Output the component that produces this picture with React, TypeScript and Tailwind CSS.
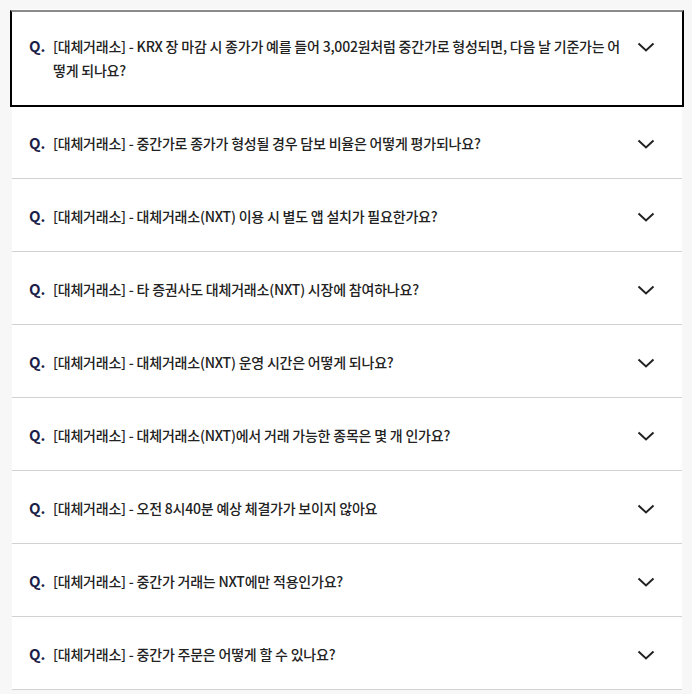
import React from "react";

const items = [
  "[대체거래소] - KRX 장 마감 시 종가가 예를 들어 3,002원처럼 중간가로 형성되면, 다음 날 기준가는 어떻게 되나요?",
  "[대체거래소] - 중간가로 종가가 형성될 경우 담보 비율은 어떻게 평가되나요?",
  "[대체거래소] - 대체거래소(NXT) 이용 시 별도 앱 설치가 필요한가요?",
  "[대체거래소] - 타 증권사도 대체거래소(NXT) 시장에 참여하나요?",
  "[대체거래소] - 대체거래소(NXT) 운영 시간은 어떻게 되나요?",
  "[대체거래소] - 대체거래소(NXT)에서 거래 가능한 종목은 몇 개 인가요?",
  "[대체거래소] - 오전 8시40분 예상 체결가가 보이지 않아요",
  "[대체거래소] - 중간가 거래는 NXT에만 적용인가요?",
  "[대체거래소] - 중간가 주문은 어떻게 할 수 있나요?",
];

function Chevron() {
  return (
    <svg width="18" height="10" viewBox="0 0 18 10" className="mt-[8px] shrink-0">
      <polyline points="1.5,1.5 9,8.5 16.5,1.5" fill="none" stroke="#222" strokeWidth="2" />
    </svg>
  );
}

export default function App() {
  return (
    <div
      className="min-h-[694px] bg-[#f7f7f8] pt-[9px]"
      style={{ fontFamily: '"Noto Sans CJK KR", "Noto Sans", sans-serif' }}
    >
      <div className="ml-[12px] w-[670px] bg-white">
        {items.map((t, i) => (
          <div key={i} className="relative border-b border-[#d2d2d2]">
            {i === 0 && (
              <div className="pointer-events-none absolute -left-[2px] -right-[2px] top-[1px] -bottom-[2px] border-2 border-black border-t-[#8a8a8a]" />
            )}
            <div className="flex items-start pt-[25px] pb-[23px] pl-[17px] pr-[27px]">
              <span className="w-[24px] shrink-0 text-[15px] font-bold leading-6 text-[#1c1f4a]">Q.</span>
              <p className="flex-1 break-all pr-[17px] text-[14px] font-medium leading-6 tracking-[-0.015em] text-[#222]">
                {t}
              </p>
              <Chevron />
            </div>
          </div>
        ))}
      </div>
    </div>
  );
}
